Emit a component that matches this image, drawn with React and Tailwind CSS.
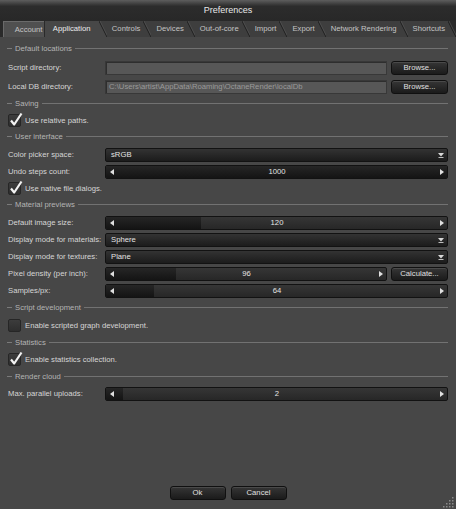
import React from "react";

const tabs = ["Controls", "Devices", "Out-of-core", "Import", "Export", "Network Rendering", "Shortcuts"];

const Sep = ({ left, right }) => (
  <svg width="8" height="16" viewBox="0 0 8 16" className="block shrink-0">
    <rect width="8" height="16" fill={right} />
    <polygon points="0,0 8,16 0,16" fill={left} />
    <line x1="0" y1="0" x2="8" y2="16" stroke="#1e1e1e" strokeWidth="1" />
    <line x1="1" y1="0" x2="9" y2="16" stroke="#5a5a5a" strokeWidth="0.6" />
  </svg>
);

const Header = ({ title, className = "" }) => (
  <div className={`flex h-[17px] items-center ${className}`}>
    <div className="ml-[7px] h-px w-[5px] bg-[#7a7a7a]" />
    <span className="ml-[3px] text-[#b4b4b4]">{title}</span>
    <div className="ml-[3px] h-px flex-1 bg-[#727272]" />
  </div>
);

const Row = ({ label, children, className = "" }) => (
  <div className={`flex h-[17px] items-center ${className}`}>
    <div className="w-[105px] shrink-0 whitespace-nowrap pl-[8px] text-[#d6d6d6]">{label}</div>
    <div className="flex flex-1 items-center gap-[4px]">{children}</div>
  </div>
);

const Button = ({ children, className = "" }) => (
  <div
    className={`flex h-[14px] items-center justify-center rounded-[3px] border border-[#101010] bg-linear-to-b from-[#363636] to-[#1b1b1b] text-[#e0e0e0] shadow-[inset_0_1px_0_#4a4a4a] ${className}`}
  >
    {children}
  </div>
);

const Check = ({ checked, label, className = "" }) => (
  <div className={`flex h-[17px] items-center pl-[8px] ${className}`}>
    <div className="relative h-[13px] w-[13px] shrink-0 rounded-[2px] border border-[#262626] bg-linear-to-b from-[#3c3c3c] to-[#2e2e2e]">
      {checked && (
        <svg width="14" height="15" viewBox="0 0 14 15" className="absolute left-[0px] top-[-3px]">
          <path d="M2 8.5 L5.2 12.5 L12.5 1.5" fill="none" stroke="#f2f2f2" strokeWidth="2.2" strokeLinejoin="round" />
        </svg>
      )}
    </div>
    <span className="ml-[4px] text-[#d6d6d6]">{label}</span>
  </div>
);

const Dropdown = ({ value }) => (
  <div className="flex h-[14px] flex-1 items-center justify-between rounded-[2px] border border-[#121212] bg-linear-to-b from-[#333333] to-[#1c1c1c] pl-[5px] pr-[3px] text-[#e4e4e4]">
    <span>{value}</span>
    <svg width="6" height="6" viewBox="0 0 6 6">
      <polygon points="0,1 6,1 3,4.5" fill="#d8d8d8" />
      <rect x="0.5" y="5" width="5" height="1" fill="#bcbcbc" />
    </svg>
  </div>
);

const Slider = ({ value, fill, className = "flex-1" }) => (
  <div className={`relative flex h-[14px] items-center overflow-hidden rounded-[2px] border border-[#121212] bg-linear-to-b from-[#363636] to-[#272727] ${className}`}>
    <div
      className="absolute inset-y-0 left-0 bg-linear-to-b from-[#262626] to-[#141414]"
      style={{ width: `${fill}%` }}
    />
    <svg width="4" height="6" viewBox="0 0 4 6" className="relative ml-[4px]">
      <polygon points="4,0 4,6 0,3" fill="#e0e0e0" />
    </svg>
    <span className="relative flex-1 text-center text-[#e4e4e4]">{value}</span>
    <svg width="4" height="6" viewBox="0 0 4 6" className="relative mr-[3px]">
      <polygon points="0,0 0,6 4,3" fill="#e0e0e0" />
    </svg>
  </div>
);

const Field = ({ value }) => (
  <div className="flex h-[14px] w-[282px] items-center overflow-hidden whitespace-nowrap border border-[#383838] bg-[#575757] px-[3px] text-[#9a9a9a] shadow-[inset_1px_1px_0_#2e2e2e]">
    {value}
  </div>
);

export default function App() {
  return (
    <div className="relative flex h-[509px] w-[456px] flex-col overflow-hidden bg-[#474747] font-['Liberation_Sans',Arial,sans-serif] text-[7.7px] leading-none">
      {/* title bar */}
      <div className="flex h-[21px] items-center justify-center bg-linear-to-b from-[#5e5e5e] via-[#2c2c2c] via-30% to-[#282828] pb-[1px] text-[9px] text-[#e8e8e8]">
        Preferences
      </div>

      {/* tabs */}
      <div className="flex h-[16px] items-stretch bg-[#2a2a2a] pl-[3px]">
        <div className="flex w-[41px] items-center justify-end border-l border-t border-[#6a6a6a] bg-[#505050] pr-[1px] text-[#c4c4c4]">
          Account
        </div>
        <div className="ml-[1px] flex w-[55px] items-center justify-center bg-[#474747] text-[#ececec]">
          Application
        </div>
        <Sep left="#474747" right="#3e3e3e" />
        {tabs.map((t, i) => (
          <React.Fragment key={t}>
            <div className="flex items-center whitespace-nowrap bg-[#3e3e3e] pl-[5px] pr-[3px] text-[#c4c4c4]">{t}</div>
            <Sep left="#3e3e3e" right={i === tabs.length - 1 ? "#2a2a2a" : "#3e3e3e"} />
          </React.Fragment>
        ))}
      </div>

      {/* content */}
      <div className="flex flex-1 flex-col pr-[8px] pt-[3px]">
        <Header title="Default locations" />
        <Row label="Script directory:" className="mt-[2px]">
          <Field value="" />
          <Button className="flex-1">Browse...</Button>
        </Row>
        <Row label="Local DB directory:" className="mt-[2px]">
          <Field value="C:\Users\artist\AppData\Roaming\OctaneRender\localDb" />
          <Button className="flex-1">Browse...</Button>
        </Row>
        <Header title="Saving" />
        <Check checked label="Use relative paths." />
        <Header title="User interface" className="mt-[-1px]" />
        <Row label="Color picker space:" className="mt-[1px]">
          <Dropdown value="sRGB" />
        </Row>
        <Row label="Undo steps count:">
          <Slider value="1000" fill={100} />
        </Row>
        <Check checked label="Use native file dialogs." />
        <Header title="Material previews" className="mt-[-1px]" />
        <Row label="Default image size:" className="mt-[1px]">
          <Slider value="120" fill={28} />
        </Row>
        <Row label="Display mode for materials:">
          <Dropdown value="Sphere" />
        </Row>
        <Row label="Display mode for textures:">
          <Dropdown value="Plane" />
        </Row>
        <Row label="Pixel density (per inch):">
          <Slider value="96" fill={25} className="w-[282px]" />
          <Button className="flex-1">Calculate...</Button>
        </Row>
        <Row label="Samples/px:">
          <Slider value="64" fill={14} />
        </Row>
        <Header title="Script development" />
        <Check label="Enable scripted graph development." className="mt-[1px]" />
        <Header title="Statistics" />
        <Check checked label="Enable statistics collection." />
        <Header title="Render cloud" />
        <Row label="Max. parallel uploads:">
          <Slider value="2" fill={5} />
        </Row>

        <div className="flex-1" />
        <div className="flex justify-center gap-[5px] pb-[9px] pl-[8px]">
          <Button className="w-[56px]">Ok</Button>
          <Button className="w-[56px]">Cancel</Button>
        </div>
      </div>

      {/* resize grip */}
      <svg width="12" height="12" viewBox="0 0 12 12" className="absolute bottom-[1px] right-[1px]">
        {[[10, 2], [10, 5], [7, 5], [10, 8], [7, 8], [4, 8], [10, 11], [7, 11], [4, 11], [1, 11]].map(([x, y]) => (
          <rect key={`${x}-${y}`} x={x - 1} y={y - 1} width="1.5" height="1.5" fill="#8a8a8a" />
        ))}
      </svg>
    </div>
  );
}
